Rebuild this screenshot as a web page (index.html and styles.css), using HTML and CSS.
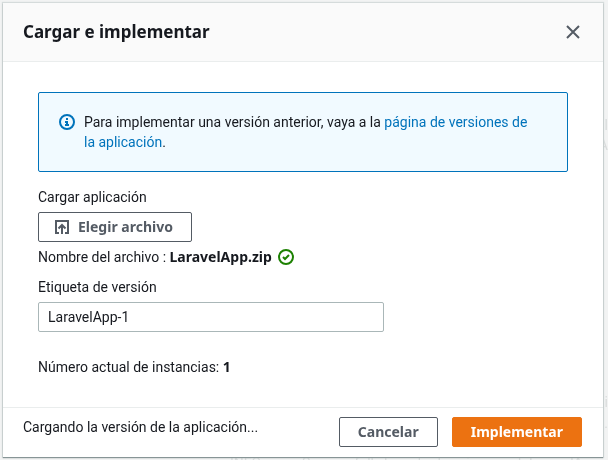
FILE: index.html
```html
<!DOCTYPE html>
<html lang="es">
<head>
  <meta charset="UTF-8" />
  <meta name="viewport" content="width=device-width, initial-scale=1.0" />
  <title>Cargar e implementar</title>
  <link rel="stylesheet" href="styles.css">
</head>
<body>
  <div class="page-behind" aria-hidden="true">
    <span class="ghost ghost-status">II</span>
    <span class="ghost ghost-letter">A</span>
    <span class="ghost ghost-i">i</span>
    <span class="ghost ghost-s">s.</span>
    <span class="ghost ghost-info">INFO</span>
    <span class="ghost ghost-event">Successfully launched environment: LaravelApp</span>
  </div>
  <form class="modal" role="dialog" aria-labelledby="modal-title">
    <header class="modal-header">
      <h2 id="modal-title">Cargar e implementar</h2>
      <button type="button" class="close" aria-label="Cerrar">
        <svg viewBox="0 0 16 16" width="16" height="16"><path d="M2 2l12 12M14 2L2 14" /></svg>
      </button>
    </header>
    <div class="modal-body">
      <div class="alert">
        <svg class="icon icon-info" viewBox="0 0 16 16" width="16" height="16">
          <circle cx="8" cy="8" r="7" />
          <path d="M8 12V8H6M6 11h4M8 4v2" />
        </svg>
        <p>Para implementar una versión anterior, vaya a la <a href="#">página de versiones de la aplicación</a>.</p>
      </div>
      <div class="field">
        <span class="label" id="upload-label">Cargar aplicación</span>
        <button type="button" class="btn btn-upload" aria-describedby="upload-label">
          <svg class="icon" viewBox="0 0 16 16" width="16" height="16">
            <path d="M5 14H2V2h12v12h-3M8 15V6M4.500 9.500l3.500-3.500 3.500 3.500" />
          </svg>
          Elegir archivo
        </button>
        <p class="file-name">
          <span>Nombre del archivo : <strong>LaravelApp.zip</strong></span>
          <svg class="icon icon-success" viewBox="0 0 16 16" width="16" height="16">
            <circle cx="8" cy="8" r="7" />
            <path d="M5 8l2 2 4-4" />
          </svg>
        </p>
      </div>
      <div class="field">
        <label for="version-label">Etiqueta de versión</label>
        <input type="text" id="version-label" value="LaravelApp-1">
      </div>
      <p class="instances">Número actual de instancias: <strong>1</strong></p>
    </div>
    <footer class="modal-footer">
      <span class="status">Cargando la versión de la aplicación...</span>
      <button type="button" class="btn">Cancelar</button>
      <button type="submit" class="btn btn-primary">Implementar</button>
    </footer>
  </form>
</body>
</html>
```
FILE: styles.css
```css
:root {
  --text: #16191f;
  --grey: #545b64;
  --blue: #0073bb;
  --green: #1d8102;
  --orange: #ec7211;
  --line: #eaeded;
}
* {
  box-sizing: border-box;
}
body {
  margin: 0;
  padding: 3px 5px 3px 3px;
  background-color: #f2f3f3;
  color: var(--text);
  font-family: Roboto, sans-serif;
  font-size: 14px;
  line-height: 20px;
}
h2, p {
  margin: 0;
}
a {
  color: var(--blue);
  text-decoration: none;
}
strong {
  font-family: "Noto Sans", sans-serif;
  line-height: 1;
}
/* Faded page under the modal */
.page-behind {
  position: fixed;
  inset: 0;
  overflow: hidden;
}
.ghost {
  position: absolute;
  color: #d9dcdc;
  white-space: nowrap;
}
.ghost-status {
  right: 0;
  top: 115px;
}
.ghost-letter {
  right: 0;
  top: 135px;
}
.ghost-i {
  right: 0;
  top: 392px;
}
.ghost-s {
  right: 0;
  top: 413px;
}
.ghost-info {
  left: 230px;
  top: 453px;
}
.ghost-event {
  left: 302px;
  top: 453px;
}
.modal {
  position: relative;
  background-color: #fff;
  box-shadow: 0 1px 1px #879596, 0 0 1px 1px #d5dbdb;
}
.modal-header {
  display: flex;
  align-items: center;
  justify-content: space-between;
  padding: 19px 20px;
  background-color: #fafafa;
  border-bottom: 1px solid var(--line);
}
.modal-header h2 {
  font-family: "Noto Sans", sans-serif;
  font-size: 17px;
  line-height: 20px;
}
.close {
  display: flex;
  padding: 2px;
  border: none;
  background: none;
  cursor: pointer;
}
svg {
  fill: none;
  stroke: var(--grey);
  stroke-width: 2;
}
.icon {
  flex: none;
}
.icon-info {
  margin-top: 2px;
  stroke: var(--blue);
}
.icon-success {
  stroke: var(--green);
}
.modal-body {
  padding: 30px 35px;
}
.alert {
  display: flex;
  gap: 9px;
  margin-bottom: 15px;
  padding: 19px 28px 19px 20px;
  background-color: #f1faff;
  border: 1px solid var(--blue);
  border-radius: 2px;
}
.field {
  margin-bottom: 10px;
}
.field label, .label {
  display: block;
  margin-bottom: 5px;
}
.field input {
  display: block;
  width: 346px;
  max-width: 100%;
  height: 30px;
  padding: 0 9px;
  border: 1px solid #aab7b8;
  border-radius: 2px;
  color: var(--text);
  font: inherit;
}
.btn {
  display: inline-flex;
  align-items: center;
  justify-content: center;
  gap: 8px;
  height: 30px;
  padding: 0 18px;
  border: 1px solid var(--grey);
  border-radius: 2px;
  background-color: #fff;
  color: var(--grey);
  font: 700 14px/20px "Noto Sans", sans-serif;
  cursor: pointer;
}
.btn-upload {
  display: flex;
  padding: 0 18px 0 15px;
}
.btn-primary {
  border-color: var(--orange);
  background-color: var(--orange);
  color: #fff;
}
.file-name {
  display: flex;
  align-items: center;
  gap: 6px;
  margin-top: 5px;
}
.instances {
  margin-top: 25px;
}
.modal-footer {
  display: flex;
  align-items: flex-start;
  gap: 14px;
  padding: 9px 21px 10px 20px;
  border-top: 1px solid var(--line);
}
.status {
  flex: 1;
}
```
